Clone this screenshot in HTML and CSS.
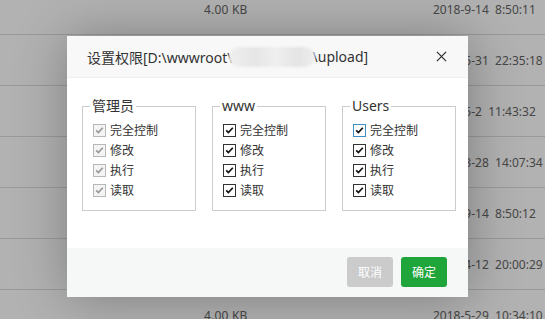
FILE: index.html
```html
<!DOCTYPE html>
<html lang="zh-CN">
<head>
  <meta charset="UTF-8">
  <title>设置权限</title>
  <link rel="stylesheet" href="styles.css">
</head>
<body>
  <!-- file list behind the dialog -->
  <div class="rows">
    <div class="row"><span class="size">4.00 KB</span><span class="time">2018-9-14  8:50:11</span></div>
    <div class="row"><span class="size">4.00 KB</span><span class="time">2018-5-31  22:35:18</span></div>
    <div class="row"><span class="size">4.00 KB</span><span class="time">2018-5-2  11:43:32</span></div>
    <div class="row"><span class="size">4.00 KB</span><span class="time">2018-3-28  14:07:34</span></div>
    <div class="row"><span class="size">4.00 KB</span><span class="time">2018-9-14  8:50:12</span></div>
    <div class="row"><span class="size">4.00 KB</span><span class="time">2018-4-12  20:00:29</span></div>
    <div class="row"><span class="size">4.00 KB</span><span class="time">2018-5-29  10:34:10</span></div>
  </div>
  <div class="shade"></div>

  <!-- permission dialog -->
  <div class="dialog">
    <div class="dialog-head">
      <span class="title">设置权限[D:\wwwroot\<span class="blur"></span>\upload]</span>
      <svg class="close" viewBox="0 0 12 12"><path d="M1 1L11 11M11 1L1 11"/></svg>
    </div>
    <div class="dialog-body">
      <fieldset class="group">
        <legend>管理员</legend>
        <label class="perm"><span class="ck off"><svg viewBox="0 0 13 13"><path d="M2.6 6.4L5.2 9L10.4 3.2"/></svg></span>完全控制</label>
        <label class="perm"><span class="ck off"><svg viewBox="0 0 13 13"><path d="M2.6 6.4L5.2 9L10.4 3.2"/></svg></span>修改</label>
        <label class="perm"><span class="ck off"><svg viewBox="0 0 13 13"><path d="M2.6 6.4L5.2 9L10.4 3.2"/></svg></span>执行</label>
        <label class="perm"><span class="ck off"><svg viewBox="0 0 13 13"><path d="M2.6 6.4L5.2 9L10.4 3.2"/></svg></span>读取</label>
      </fieldset>
      <fieldset class="group">
        <legend>www</legend>
        <label class="perm"><span class="ck"><svg viewBox="0 0 13 13"><path d="M2.6 6.4L5.2 9L10.4 3.2"/></svg></span>完全控制</label>
        <label class="perm"><span class="ck"><svg viewBox="0 0 13 13"><path d="M2.6 6.4L5.2 9L10.4 3.2"/></svg></span>修改</label>
        <label class="perm"><span class="ck"><svg viewBox="0 0 13 13"><path d="M2.6 6.4L5.2 9L10.4 3.2"/></svg></span>执行</label>
        <label class="perm"><span class="ck"><svg viewBox="0 0 13 13"><path d="M2.6 6.4L5.2 9L10.4 3.2"/></svg></span>读取</label>
      </fieldset>
      <fieldset class="group">
        <legend>Users</legend>
        <label class="perm"><span class="ck focus"><svg viewBox="0 0 13 13"><path d="M2.6 6.4L5.2 9L10.4 3.2"/></svg></span>完全控制</label>
        <label class="perm"><span class="ck"><svg viewBox="0 0 13 13"><path d="M2.6 6.4L5.2 9L10.4 3.2"/></svg></span>修改</label>
        <label class="perm"><span class="ck"><svg viewBox="0 0 13 13"><path d="M2.6 6.4L5.2 9L10.4 3.2"/></svg></span>执行</label>
        <label class="perm"><span class="ck"><svg viewBox="0 0 13 13"><path d="M2.6 6.4L5.2 9L10.4 3.2"/></svg></span>读取</label>
      </fieldset>
    </div>
    <div class="dialog-foot">
      <button class="btn btn-cancel">取消</button>
      <button class="btn btn-ok">确定</button>
    </div>
  </div>
</body>
</html>
```

FILE: styles.css
```css
html, body { margin: 0; height: 319px; overflow: hidden; }
body { font-family: "Noto Sans", "Noto Sans CJK SC", sans-serif; background: #fff; color: #333; position: relative; }

.rows { margin-top: -16px; }
.row { height: 50px; border-bottom: 1px solid #ddd; display: grid; grid-template-columns: 433px 1fr; align-items: center; font-size: 12px; color: #666; }
.row .size { padding-left: 204px; white-space: nowrap; letter-spacing: 0.2px; }
.row .time { white-space: pre; }

.shade { position: absolute; inset: 0; background: rgba(0,0,0,0.3); }

.dialog { position: absolute; left: 67px; top: 36px; width: 401px; background: #fff; box-shadow: 1px 1px 50px rgba(0,0,0,0.3); }
.dialog-head { height: 42px; box-sizing: border-box; background: #f8f8f8; border-bottom: 1px solid #eee; display: flex; align-items: center; justify-content: space-between; padding: 0 21px 0 20px; }
.title { font-size: 14px; color: #333; white-space: nowrap; display: flex; align-items: center; }
.blur { display: inline-block; width: 86px; height: 20px; margin: 0 -2px 0 -4px; border-radius: 10px; background: linear-gradient(90deg, #efefef, #e6e6e6 30%, #efefef 55%, #e4e4e4 80%, #eeeeee); filter: blur(1px); }
.close { width: 11px; height: 11px; }
.close path { stroke: #333; stroke-width: 1.4; fill: none; }

.dialog-body { height: 170px; box-sizing: border-box; padding: 20px 0 0 15px; display: flex; gap: 16px; align-items: flex-start; }
.group { width: 114px; box-sizing: border-box; margin: 0; border: 1px solid #ccc; padding: 6px 0 10px 10px; }
.group legend { font-size: 14px; line-height: 16px; color: #333; padding: 0 2px; margin-left: -3px; }
.perm { display: flex; align-items: center; gap: 4px; height: 20px; font-size: 12px; color: #333; }
.ck { width: 13px; height: 13px; box-sizing: border-box; border: 1px solid #333; background: #fff; display: flex; }
.ck svg { width: 11px; height: 11px; }
.ck path { fill: none; stroke: #111; stroke-width: 2; }
.ck.off { border-color: #b8b8b8; background: #f4f4f4; }
.ck.off path { stroke: #999; }
.ck.focus { border-color: #3b8fc4; }

.dialog-foot { height: 49px; box-sizing: border-box; background: #f6f8f8; padding: 9px 21px 0 0; display: flex; justify-content: flex-end; gap: 8px; }
.btn { width: 46px; height: 30px; border: none; border-radius: 3px; color: #fff; font-size: 12px; font-family: inherit; padding: 0; }
.btn-cancel { background: #cbcbcb; }
.btn-ok { background: #20a53a; }
```
